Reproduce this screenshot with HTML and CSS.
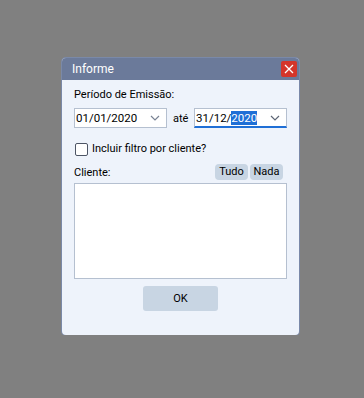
FILE: index.html
```html
<!DOCTYPE html>
<html lang="pt">
<head>
    <meta charset="UTF-8">
    <title>Informe</title>
    <link rel="stylesheet" href="styles.css">
</head>
<body>
    <div class="dialog">
        <div class="title-bar">
            <span class="title">Informe</span>
            <span class="close">
                <svg width="10" height="10" viewBox="0 0 10 10">
                    <path d="M1 1 L9 9 M9 1 L1 9" stroke="#fff" stroke-width="1.3"/>
                </svg>
            </span>
        </div>
        <div class="content">
            <div class="label">Período de Emissão:</div>
            <div class="period">
                <div class="combo">
                    <span>01/01/2020</span>
                    <svg class="arrow" width="10" height="6" viewBox="0 0 10 6"><path d="M1 1 L5 5 L9 1" fill="none" stroke="#7a8394" stroke-width="1.2"/></svg>
                </div>
                <span class="ate">até</span>
                <div class="combo active">
                    <span>31/12/<span class="sel">2020</span></span>
                    <svg class="arrow" width="10" height="6" viewBox="0 0 10 6"><path d="M1 1 L5 5 L9 1" fill="none" stroke="#5d6676" stroke-width="1.2"/></svg>
                </div>
            </div>
            <label class="check-row">
                <span class="checkbox"></span>
                <span>Incluir filtro por cliente?</span>
            </label>
            <div class="client-row">
                <span>Cliente:</span>
                <div class="small-buttons">
                    <button class="small">Tudo</button>
                    <button class="small">Nada</button>
                </div>
            </div>
            <div class="list"></div>
            <div class="footer">
                <button class="ok">OK</button>
            </div>
        </div>
    </div>
</body>
</html>
```

FILE: styles.css
```css
body {
    margin: 0;
    background-color: #808080;
    font-family: Roboto, "Noto Sans", sans-serif;
    font-size: 11px;
    color: #000;
}
.dialog {
    margin: 58px 0 0 62px;
    width: 237px;
    height: 277px;
    background-color: #eef3fb;
    border-radius: 4px;
    overflow: hidden;
    box-shadow: 0 0 0 1px #7a89a8;
}
.title-bar {
    height: 22px;
    background-color: #6b7a9a;
    display: flex;
    align-items: center;
    justify-content: space-between;
    padding: 0 2px 0 10px;
}
.title {
    color: #fff;
    font-size: 12px;
}
.close {
    width: 16px;
    height: 16px;
    background-color: #d4352b;
    border-radius: 2px;
    display: flex;
    align-items: center;
    justify-content: center;
}
.content {
    padding: 7px 12px 0 12px;
}
.label {
    line-height: 16px;
}
.period {
    display: flex;
    align-items: center;
    margin-top: 5px;
}
.combo {
    width: 93px;
    height: 20px;
    box-sizing: border-box;
    border: 1px solid #b5c0d0;
    background-color: #fff;
    display: flex;
    align-items: center;
    justify-content: space-between;
    padding: 0 6px 0 1px;
    font-size: 11.5px;
}
.combo.active {
    border-bottom: 2px solid #1f6fd6;
}
.sel {
    background-color: #1f6fd6;
    color: #fff;
}
.ate {
    margin: 0 5px 0 6px;
    width: 16px;
}
.check-row {
    display: flex;
    align-items: center;
    gap: 4px;
    margin: 14px 0 0 1px;
    line-height: 14px;
}
.checkbox {
    width: 11px;
    height: 11px;
    border: 1px solid #4d5565;
    border-radius: 2px;
    background-color: #fff;
}
.client-row {
    display: flex;
    justify-content: space-between;
    align-items: center;
    margin-top: 8px;
}
.small-buttons {
    display: flex;
    gap: 2px;
    margin-right: 4px;
}
.small {
    font-family: inherit;
    font-size: 11px;
    height: 16px;
    width: 33px;
    border: none;
    border-radius: 4px;
    background-color: #c8d5e3;
    padding: 0;
    line-height: 16px;
    color: #000;
}
.list {
    margin-top: 3px;
    height: 94px;
    border: 1px solid #b5c0d0;
    background-color: #fff;
}
.footer {
    display: flex;
    justify-content: center;
    margin-top: 7px;
}
.ok {
    width: 75px;
    height: 25px;
    border: none;
    border-radius: 3px;
    background-color: #c8d5e3;
    font-family: inherit;
    font-size: 11px;
    color: #000;
}
```
